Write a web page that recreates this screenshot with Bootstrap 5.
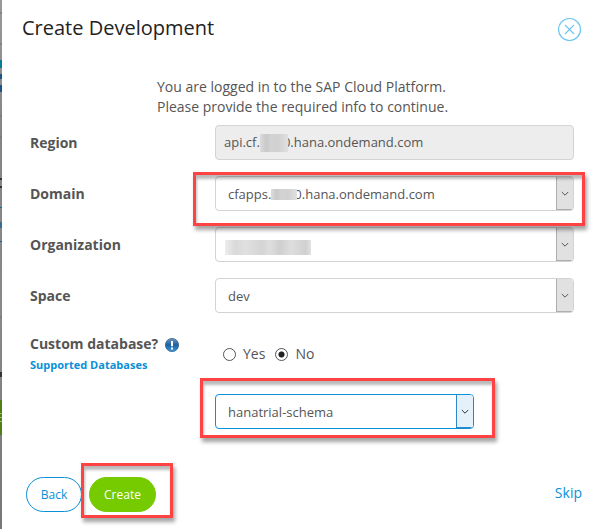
<!DOCTYPE html>
<html lang="en">
<head>
<meta charset="utf-8">
<meta name="viewport" content="width=device-width, initial-scale=1">
<title>Create Development</title>
<link href="https://cdn.jsdelivr.net/npm/bootstrap@5.3.0/dist/css/bootstrap.min.css" rel="stylesheet">
<style>
body{font:14px/20px "Open Sans",sans-serif;color:#555;width:595px;height:529px;overflow:hidden;background:#fff}
.page-edge{width:2px;flex:none;background:linear-gradient(#999,#858585 25%,#888 60%,#777)}
.dialog{padding:0 21px 0 24px}
.dialog-head{height:77px;padding-top:14px;margin-left:-4px}
.dialog-title{font-size:20px;line-height:28px;color:#222;font-weight:400}
.close-btn{width:24px;height:24px;margin-top:3px;margin-right:-8px}
.intro{margin-left:131px;height:48px;white-space:nowrap}
.form-line{height:51px;padding-left:4px}
.line-label{width:185px;font-weight:700;line-height:35px;flex:none}
.field{height:35px;width:359px;border:1px solid #d3d3d3;border-radius:4px;background:#fff;font-size:13px;line-height:33px;padding-left:12px;white-space:nowrap;overflow:hidden}
.field:not(.field-off)>span:not(.arrow):not(.masked){padding-top:2px;line-height:31px}
.field-off{background:#ededed;padding-left:8px}
.field-on{width:259px;border-color:#0a90d6}
.arrow{width:17px;height:33px;padding:1px 1px 0 0;border-left:1px solid #adadad;border-bottom:1px solid #adadad;background:#e1e1e1}
.arrow svg{flex:none}
.field-on .arrow{background:#e4f1fb;border-color:#2f87c9}
.masked{display:inline-block;flex:none;position:relative;background:linear-gradient(90deg,#dcdcdc,#c9c9c9 22%,#d3d3d3 40%,#d1d1d1 65%,#e0e0e0)}
.mask-a{width:28px;height:18px;margin-right:-5px}
.mask-b{width:26px;height:11px;margin-right:-3px;top:1px}
.mask-c{width:86px;height:15px;margin-left:-3px;top:3px;background:linear-gradient(90deg,#ededed,#d9d9d9 12%,#e0e0e0 24%,#d4d4d4 43%,#dedede 52%,#cfcfcf 64%,#dedede 77%,#d0d0d0 94%,#e2e2e2)}
.db-line{height:65px;padding-left:4px}
.db-label{padding-top:6px}
.db-icon{margin-left:7px;margin-top:2px}
.db-link{font-size:11px;font-weight:700;line-height:18px;margin-top:3px;color:#0a90d6;text-decoration:none}
.radio-row{padding:15px 0 0 8px;height:50px}
.radio-row input{appearance:none;width:13px;height:13px;border:1px solid #555;border-radius:50%;margin:0}
.radio-row input:checked{background:radial-gradient(circle,#222 2.7px,transparent 3.4px)}
.radio-yes{margin-left:7px}
.radio-no{margin-left:10px}
.foot{padding-top:48px}
.pill{height:35px;border-radius:18px;font-size:12px;line-height:33px;padding:0;border:1px solid #0a90d6;color:#0a90d6;background:#fff}
.pill-back{width:56px}
.pill-create{width:67px;margin-left:7px;background:#76cb00;border-color:#76cb00;color:#fff}
.skip{color:#0a90d6;text-decoration:none;line-height:32px;margin-right:-8px}
.callout{position:absolute;border:3px solid #ff4242;box-shadow:2px 4px 4px rgba(0,0,0,.36),inset 1px 4px 3px rgba(0,0,0,.27);pointer-events:none}
.callout-domain{left:193px;top:172px;width:392px;height:54px}
.callout-schema{left:200px;top:378px;width:295px;height:60px}
.callout-create{left:81px;top:463px;width:92px;height:55px}
</style>
<script src="https://cdn.jsdelivr.net/npm/bootstrap@5.3.0/dist/js/bootstrap.bundle.min.js"></script>
</head>
<body class="d-flex position-relative">
<svg class="page-edge" width="2" height="529" aria-hidden="true">
<path d="M0 13h2M0 44h2M0 116h2M0 137h2M0 317h2" stroke="#707070"/>
<path fill="#087aa0" d="M0 60h2v8H0z"/><path fill="#1d5288" d="M0 74h2v5H0zM0 85h2v7H0z"/>
<path fill="#333" d="M0 178h2v2H0zM0 186h2v2H0zM0 372h2v5H0z"/>
<path fill="#0c6e91" d="M0 207h2v1H0zM0 241h2v1H0z"/><path fill="#3c6d91" d="M0 222h2v6H0z"/>
<path fill="#4c8015" d="M0 400h2v35H0z"/><path fill="#9bbc77" d="M0 413h2v1H0zM0 417h2v1H0zM0 421h2v1H0z"/>
</svg>
<main class="dialog flex-grow-1">
<header class="dialog-head d-flex justify-content-between">
<h1 class="dialog-title mb-0">Create Development</h1>
<button class="close-btn btn p-0 border-0 d-flex" aria-label="Close"><svg width="24" height="24" fill="none" stroke="#6dc5f0"><circle cx="11.5" cy="12.5" r="11" stroke-width="1.2"/><path d="M7 8l9 9m0-9l-9 9" stroke-width="1.1"/></svg></button>
</header>
<p class="intro mb-0">You are logged in to the SAP Cloud Platform.<br>Please provide the required info to continue.</p>
<div class="form-line d-flex"><div class="line-label">Region</div>
<div class="field field-off d-flex align-items-center"><span>api.cf.</span><span class="masked mask-a"></span><span>0.hana.ondemand.com</span></div></div>
<div class="form-line d-flex"><div class="line-label">Domain</div>
<div class="field d-flex align-items-center"><span>cfapps.</span><span class="masked mask-b"></span><span>0.hana.ondemand.com</span><span class="arrow ms-auto d-flex justify-content-center align-items-center"><svg width="8" height="6" fill="none" stroke="#555"><path d="M.8 1L4 4.2 7.2 1"/></svg></span></div></div>
<div class="form-line d-flex"><div class="line-label">Organization</div>
<div class="field d-flex align-items-center"><span class="masked mask-c"></span><span class="arrow ms-auto d-flex justify-content-center align-items-center"><svg width="8" height="6" fill="none" stroke="#555"><path d="M.8 1L4 4.2 7.2 1"/></svg></span></div></div>
<div class="form-line d-flex"><div class="line-label">Space</div>
<div class="field d-flex align-items-center"><span>dev</span><span class="arrow ms-auto d-flex justify-content-center align-items-center"><svg width="8" height="6" fill="none" stroke="#555"><path d="M.8 1L4 4.2 7.2 1"/></svg></span></div></div>
<div class="db-line d-flex">
<div class="line-label db-label"><div class="d-flex align-items-center lh-sm"><span>Custom database?</span><svg class="db-icon" width="14" height="14"><defs><linearGradient id="ball" x2="0" y2="1"><stop stop-color="#7097bd"/><stop offset=".5" stop-color="#1c61a0"/><stop offset="1" stop-color="#3b9de2"/></linearGradient></defs><circle cx="7" cy="7" r="6.6" fill="url(#ball)" stroke="#38648c" stroke-width=".8"/><path d="M7 3v5.2M7 9.5v2" stroke="#fff" stroke-width="2"/></svg></div>
<a class="db-link d-block" href="#">Supported Databases</a></div>
<div class="radio-row d-flex"><label class="d-flex"><input class="mt-1" type="radio" name="db"><span class="radio-yes">Yes</span></label><label class="radio-no d-flex"><input class="mt-1" type="radio" name="db" checked><span class="radio-yes">No</span></label></div>
</div>
<div class="d-flex"><div class="line-label ms-1"></div><div class="field field-on d-flex align-items-center"><span>hanatrial-schema</span><span class="arrow ms-auto d-flex justify-content-center align-items-center"><svg width="8" height="6" fill="none" stroke="#333"><path d="M.8 1L4 4.2 7.2 1"/></svg></span></div></div>
<footer class="foot d-flex"><button class="btn pill pill-back">Back</button><button class="btn pill pill-create">Create</button><a class="skip ms-auto" href="#">Skip</a></footer>
</main>
<div class="callout callout-domain"></div><div class="callout callout-schema"></div><div class="callout callout-create"></div>
</body>
</html>
